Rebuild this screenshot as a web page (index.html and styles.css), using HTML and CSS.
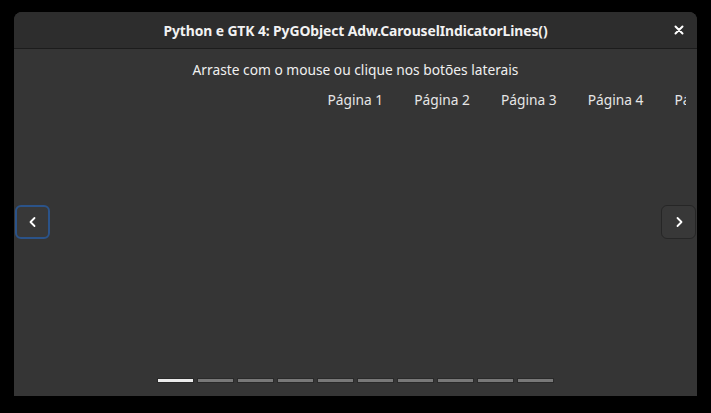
FILE: index.html
```html
<!DOCTYPE html>
<html lang="pt">
<head>
<meta charset="utf-8">
<title>Adw.CarouselIndicatorLines</title>
<link rel="stylesheet" href="styles.css">
</head>
<body>
<div class="window">
  <header class="titlebar">
    <span class="title">Python e GTK 4: PyGObject Adw.CarouselIndicatorLines()</span>
    <button class="close" aria-label="Fechar">
      <svg width="10" height="10" viewBox="0 0 10 10"><path d="M1.5 1.5 L8.5 8.5 M8.5 1.5 L1.5 8.5" stroke="#ffffff" stroke-width="2" stroke-linecap="round"/></svg>
    </button>
  </header>
  <main class="content">
    <p class="hint">Arraste com o mouse ou clique nos botões laterais</p>
    <div class="carousel">
      <div class="track">
        <div class="page">Página 1</div>
        <div class="page">Página 2</div>
        <div class="page">Página 3</div>
        <div class="page">Página 4</div>
        <div class="page">Página 5</div>
      </div>
    </div>
    <div class="indicators">
      <span class="line active"></span>
      <span class="line"></span>
      <span class="line"></span>
      <span class="line"></span>
      <span class="line"></span>
      <span class="line"></span>
      <span class="line"></span>
      <span class="line"></span>
      <span class="line"></span>
      <span class="line"></span>
    </div>
    <button class="nav prev focused" aria-label="Anterior">
      <svg width="16" height="16" viewBox="0 0 16 16"><path d="M9.5 4 L5.5 8 L9.5 12" fill="none" stroke="#ffffff" stroke-width="1.8" stroke-linecap="round" stroke-linejoin="round"/></svg>
    </button>
    <button class="nav next" aria-label="Próximo">
      <svg width="16" height="16" viewBox="0 0 16 16"><path d="M6.5 4 L10.5 8 L6.5 12" fill="none" stroke="#ffffff" stroke-width="1.8" stroke-linecap="round" stroke-linejoin="round"/></svg>
    </button>
  </main>
</div>
</body>
</html>
```
FILE: styles.css
```css
* { box-sizing: border-box; }
html, body {
  margin: 0;
  padding: 0;
  background: #000000;
  width: 711px;
  height: 413px;
  overflow: hidden;
}
body {
  font-family: "Noto Sans", "Open Sans", sans-serif;
  color: #ffffff;
}
.window {
  margin: 12px 0 0 14px;
  width: 683px;
  height: 384px;
  border-radius: 8px 8px 0 0;
  overflow: hidden;
  display: flex;
  flex-direction: column;
  background: #353535;
}
.titlebar {
  height: 37px;
  flex: 0 0 37px;
  background: #2d2d2d;
  border-bottom: 1px solid #1c1c1c;
  display: flex;
  align-items: center;
  justify-content: center;
  position: relative;
}
.title {
  font-weight: 700;
  font-size: 13.9px;
  letter-spacing: -0.1px;
  color: #f2f2f2;
}
.close {
  position: absolute;
  right: 8px;
  top: 8px;
  width: 20px;
  height: 20px;
  border: 0;
  padding: 0;
  background: transparent;
  display: flex;
  align-items: center;
  justify-content: center;
}
.content {
  flex: 1;
  display: flex;
  flex-direction: column;
  position: relative;
}
.hint {
  margin: 11px 0 0;
  height: 20px;
  line-height: 20px;
  font-size: 13.75px;
  text-align: center;
  color: #f0f0f0;
}
.carousel {
  flex: 1;
  overflow: hidden;
  padding-top: 10px;
  margin-right: 11px;
}
.track {
  display: flex;
  margin-left: 298px;
}
.page {
  flex: 0 0 86.75px;
  text-align: center;
  font-size: 13.75px;
  line-height: 20px;
  height: 20px;
  color: #e6e6e6;
  white-space: nowrap;
}
.indicators {
  display: flex;
  justify-content: center;
  gap: 5px;
  padding: 0 0 14px 0;
}
.line {
  width: 35px;
  height: 3px;
  background: #787878;
  box-shadow: 0 0 0 1px #2a2a2a;
}
.line.active {
  background: #ececec;
}
.nav {
  position: absolute;
  top: 156px;
  width: 35px;
  height: 34px;
  border-radius: 6px;
  background: #383838;
  border: 1px solid #262626;
  padding: 0;
  display: flex;
  align-items: center;
  justify-content: center;
}
.nav.prev {
  left: 1px;
}
.nav.next {
  right: 1px;
}
.nav.focused {
  border: 2px solid #2b5389;
}
```
